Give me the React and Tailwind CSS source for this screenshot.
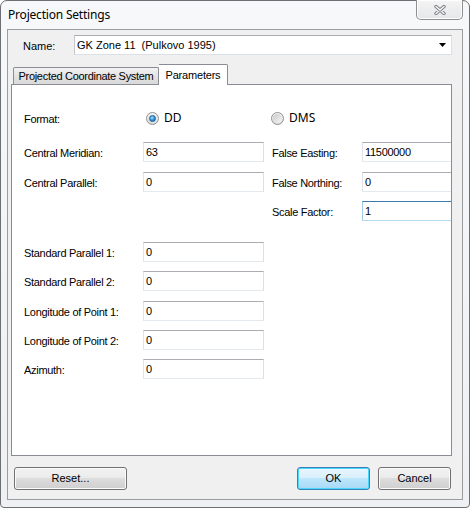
import React from "react";

const FONT = "font-['Liberation_Sans',Arial,sans-serif]";

const TextBox = ({ value, focused }) => (
  <div
    className={
      "w-[121px] h-[20px] shrink-0 bg-white border flex items-center pl-[2px] text-[11px] text-black " +
      (focused
        ? "border-[#a4c9e3] border-t-[#3d7bad] border-b-[#b7d9ed]"
        : "border-[#dbdfe6] border-t-[#abadb3] border-l-[#e2e3ea] border-b-[#e3e9ef]")
    }
  >
    {value}
  </div>
);

const Radio = ({ checked, label }) => (
  <div className="flex items-center gap-[5px]">
    <div className="w-[13px] h-[13px] rounded-full border border-[#8f9094] bg-[linear-gradient(#f4f4f4,#dcdcdc)] flex items-center justify-center">
      {checked ? (
        <div className="w-[7px] h-[7px] rounded-full bg-[radial-gradient(circle_at_40%_35%,#a8e4ff,#2b8fdb_55%,#124f8c)] border border-[#1f5e99]" />
      ) : (
        <div className="w-[9px] h-[9px] rounded-full bg-[linear-gradient(135deg,#c9c9c9,#f7f7f7)]" />
      )}
    </div>
    <span className="text-[12px] font-['Noto_Sans',sans-serif] text-black">{label}</span>
  </div>
);

const Row = ({ className, left, right }) => (
  <div className={"flex h-[20px] items-center pl-[12px] tracking-[-0.3px] " + className}>
    <span className="w-[119px] shrink-0 pt-[2px] text-[11px] text-black">{left ? left[0] : ""}</span>
    {left ? <TextBox value={left[1]} /> : <div className="w-[121px] shrink-0" />}
    {right && (
      <>
        <span className="w-[8px] shrink-0" />
        <span className="w-[90px] shrink-0 pt-[2px] text-[11px] text-black">{right[0]}</span>
        <TextBox value={right[1]} focused={right[2]} />
      </>
    )}
  </div>
);

const WinButton = ({ label, width, primary }) => (
  <button
    className={
      "h-[23px] rounded-[3px] border text-[11px] text-black flex items-center justify-center " +
      width +
      (primary
        ? " border-[#3c7fb1] bg-[linear-gradient(#eaf6fd_0%,#d9f0fc_45%,#bee6fd_50%,#a7d9f5_100%)] shadow-[inset_0_0_0_1px_#48d8ff]"
        : " border-[#707070] bg-[linear-gradient(#f2f2f2_0%,#ebebeb_45%,#dddddd_50%,#cfcfcf_100%)] shadow-[inset_0_0_0_1px_#fbfbfb]")
    }
  >
    {label}
  </button>
);

export default function App() {
  return (
    <div className={"w-[470px] h-[508px] bg-white " + FONT}>
      <div className="relative w-[470px] h-[508px] border border-[#6e6f72] rounded-t-[7px] rounded-b-[4px] bg-[linear-gradient(#f7f8fa,#eef0f3)] flex flex-col">
        {/* title bar */}
        <div className="h-[28px] pl-[7px] pt-[1px] shrink-0">
          <span className="text-[12px] font-['Noto_Sans',sans-serif] text-black tracking-[-0.2px]">
            Projection Settings
          </span>
        </div>

        {/* close button */}
        <div className="absolute left-[415px] top-[-1px] w-[47px] h-[20px] rounded-b-[5px] border border-[#8e8f92] border-t-0 bg-[linear-gradient(#f4f4f4,#e6e7e9)] shadow-[inset_0_0_0_1px_#fdfdfd] flex items-center justify-center">
          <svg width="12" height="10" viewBox="0 0 12 10">
            <path d="M2 1.5 L10 8.5 M10 1.5 L2 8.5" stroke="#7d7f84" strokeWidth="3.4" strokeLinecap="round" />
            <path d="M2 1.5 L10 8.5 M10 1.5 L2 8.5" stroke="#f8f8f8" strokeWidth="1.5" strokeLinecap="round" />
          </svg>
        </div>

        {/* client area */}
        <div className="ml-[6px] w-[456px] h-[471px] border border-[#9a9ca0] bg-[#f0f0f0] flex flex-col">
          <div className="mt-[5px] h-[20px] flex items-center pl-[15px]">
            <span className="w-[51px] pt-[2px] text-[11px] text-black">Name:</span>
            <div className="w-[378px] h-[20px] bg-white border border-[#dbdfe6] border-t-[#abadb3] border-l-[#c5c8cf] flex items-center pl-[2px] pr-[5px] text-[11px] text-black">
              <span className="flex-1">GK Zone 11&nbsp;&nbsp;(Pulkovo 1995)</span>
              <svg width="7" height="4" viewBox="0 0 7 4">
                <path d="M0 0 H7 L3.5 4 Z" fill="#000" />
              </svg>
            </div>
          </div>

          {/* tabs */}
          <div className="mt-[9px] ml-[3px] w-[441px] flex flex-col">
            <div className="h-[20px] flex items-end pl-[2px]">
              <div className="w-[146px] h-[17px] border border-b-0 border-[#898c95] rounded-t-[2px] bg-[linear-gradient(#f3f3f3,#e3e3e3_50%,#d9d9d9)] flex items-center justify-center pt-[1px] text-[11px] tracking-[-0.3px] text-black">
                Projected Coordinate System
              </div>
              <div className="relative z-10 -mb-px w-[69px] h-[21px] border border-b-0 border-l-0 border-[#898c95] rounded-tr-[2px] bg-white flex items-start justify-center pt-[2px] text-[11px] tracking-[-0.2px] text-black">
                Parameters
              </div>
            </div>
            <div className="h-[372px] border border-[#898c95] bg-white overflow-hidden flex flex-col">
              <div className="mt-[23px] h-[20px] flex items-center pl-[12px]">
                <span className="w-[122px] shrink-0 pt-[2px] text-[11px] tracking-[-0.3px] text-black">Format:</span>
                <div className="w-[125px] shrink-0">
                  <Radio checked label="DD" />
                </div>
                <Radio label="DMS" />
              </div>
              <Row className="mt-[14px]" left={["Central Meridian:", "63"]} right={["False Easting:", "11500000"]} />
              <Row className="mt-[10px]" left={["Central Parallel:", "0"]} right={["False Northing:", "0"]} />
              <Row className="mt-[9px]" right={["Scale Factor:", "1", true]} />
              <Row className="mt-[21px]" left={["Standard Parallel 1:", "0"]} />
              <Row className="mt-[9px]" left={["Standard Parallel 2:", "0"]} />
              <Row className="mt-[10px]" left={["Longitude of Point 1:", "0"]} />
              <Row className="mt-[9px]" left={["Longitude of Point 2:", "0"]} />
              <Row className="mt-[9px]" left={["Azimuth:", "0"]} />
            </div>
          </div>

          {/* buttons */}
          <div className="mt-[11px] flex items-center pl-[6px] pr-[11px]">
            <WinButton label="Reset..." width="w-[113px]" />
            <div className="ml-auto flex gap-[8px]">
              <WinButton label="OK" width="w-[73px]" primary />
              <WinButton label="Cancel" width="w-[73px]" />
            </div>
          </div>
        </div>
      </div>
    </div>
  );
}
